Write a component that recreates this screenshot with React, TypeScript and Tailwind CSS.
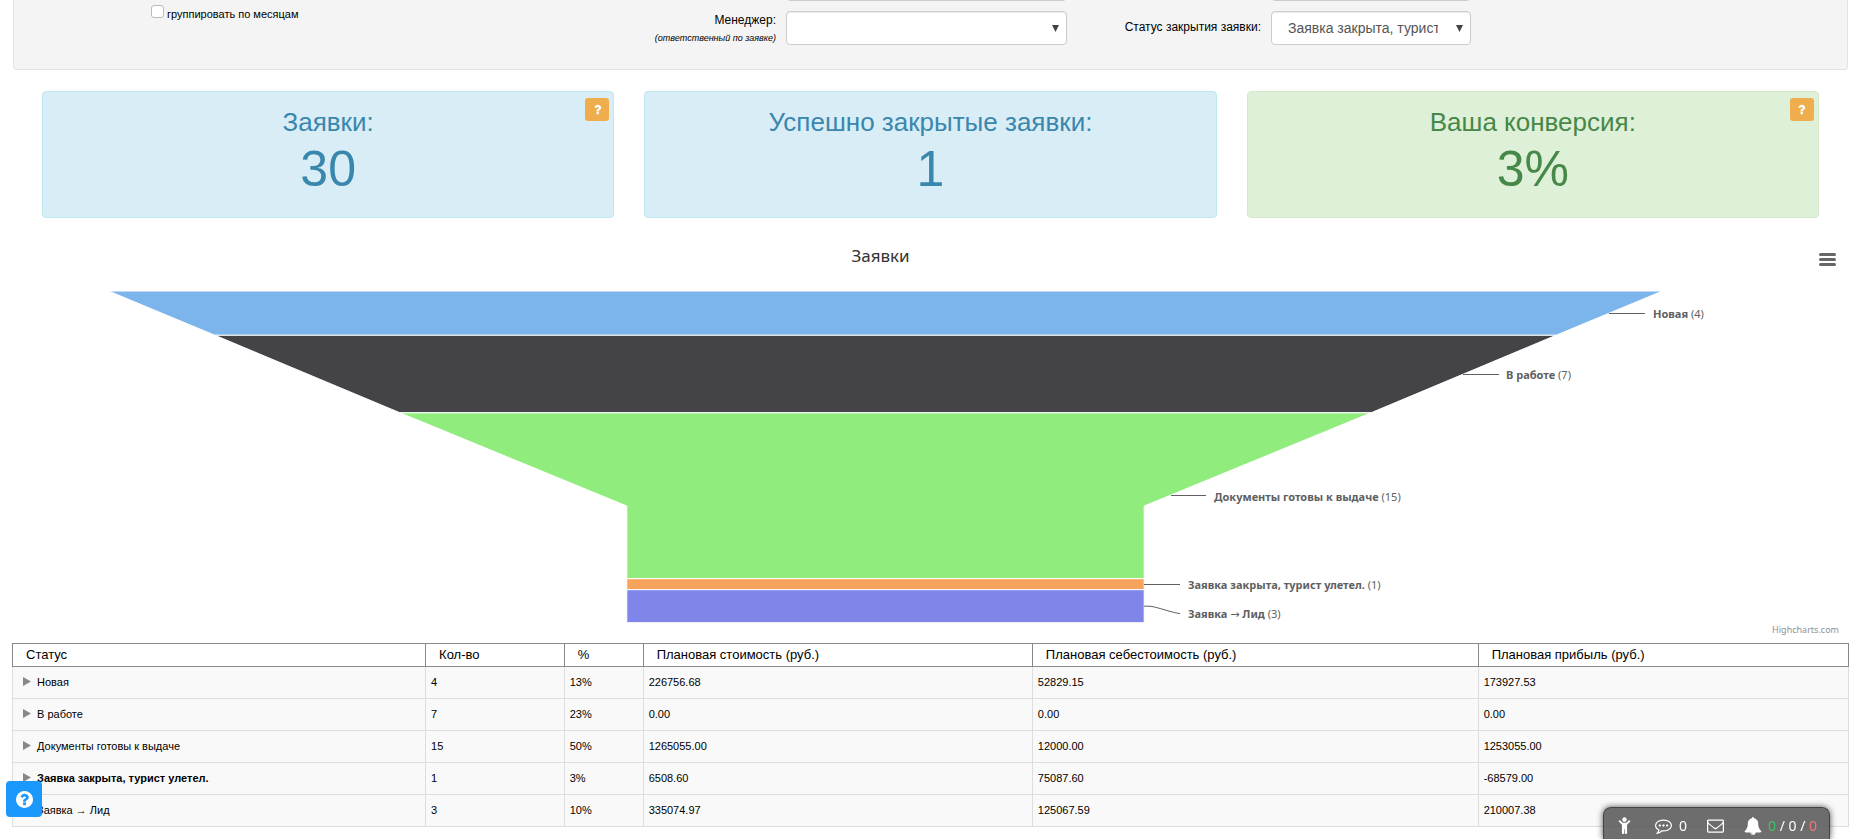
import React from "react";

const sans = "font-['Liberation_Sans',Arial,sans-serif]";
const lucida = "font-['Noto_Sans','Open_Sans',sans-serif]";

const QUESTION =
  "M1088 1256v240q0 16-12 28t-28 12h-240q-16 0-28-12t-12-28v-240q0-16 12-28t28-12h240q16 0 28 12t12 28zm316-600q0 54-15.5 101t-35 76.5-55 59.5-57.5 43.5-61 35.5q-41 23-68.5 65t-27.5 67q0 17-12 32.5t-28 15.5h-240q-15 0-25.5-18.5t-10.5-37.5v-45q0-83 65-156.5t143-108.5q59-27 84-56t25-76q0-42-46.5-74t-107.5-32q-65 0-108 29-35 25-107 115-13 16-31 16-12 0-25-8l-164-125q-13-10-15.5-25t5.5-28q160-266 464-266 80 0 161 31t146 83 106 127.5 41 158.5z";
const QUESTION_CIRCLE =
  "M1024 1376v-192q0-14-9-23t-23-9h-192q-14 0-23 9t-9 23v192q0 14 9 23t23 9h192q14 0 23-9t9-23zm256-672q0-88-55.5-163t-138.5-116-170-41q-243 0-371 213-15 24 8 42l132 100q7 6 19 6 16 0 25-12 53-68 86-92 34-24 86-24 48 0 85.5 26t37.5 59q0 38-20 61t-68 45q-63 28-115.5 86.5t-52.5 125.5v36q0 14 9 23t23 9h192q14 0 23-9t9-23q0-19 21.5-49.5t54.5-49.5q32-18 49-28.5t46-35 44.5-48 28-60.5 12.5-81zm384 192q0 209-103 385.5t-279.5 279.5-385.5 103-385.5-103-279.5-279.5-103-385.5 103-385.5 279.5-279.5 385.5-103 385.5 103 279.5 279.5 103 385.5z";
const CHILD =
  "M1188 476l-292 292v824q0 46-33 79t-79 33-79-33-33-79v-384h-64v384q0 46-33 79t-79 33-79-33-33-79v-824l-292-292q-28-28-28-68t28-68 68-28 68 28l228 228h368l228-228q28-28 68-28t68 28 28 68-28 68zm-324-220q0 93-65.5 158.5t-158.5 65.5-158.5-65.5-65.5-158.5 65.5-158.5 158.5-65.5 158.5 65.5 65.5 158.5z";
const COMMENTING =
  "M640 896q0 53-37.5 90.5t-90.5 37.5-90.5-37.5-37.5-90.5 37.5-90.5 90.5-37.5 90.5 37.5 37.5 90.5zm384 0q0 53-37.5 90.5t-90.5 37.5-90.5-37.5-37.5-90.5 37.5-90.5 90.5-37.5 90.5 37.5 37.5 90.5zm384 0q0 53-37.5 90.5t-90.5 37.5-90.5-37.5-37.5-90.5 37.5-90.5 90.5-37.5 90.5 37.5 37.5 90.5zm-512-512q-204 0-381.5 69.5t-282 187.5-104.5 255q0 112 71.5 213.5t201.5 175.5l87 50-27 96q-24 91-70 172 152-63 275-171l43-38 57 6q69 8 130 8 204 0 381.5-69.5t282-187.5 104.5-255-104.5-255-282-187.5-381.5-69.5zm896 512q0 174-120 321.5t-326 233-450 85.5q-70 0-145-8-198 175-460 242-49 14-114 22h-5q-15 0-27-10.5t-16-27.5v-1q-3-4-.5-12t2-10 4.5-9.5l6-9 7-8.5 8-9q7-8 31-34.5t34.5-38 31-39.5 32.5-51 27-59 26-76q-157-89-247.5-220t-90.5-281q0-174 120-321.5t326-233 450-85.5 450 85.5 326 233 120 321.5z";
const ENVELOPE =
  "M1664 1504v-768q-32 36-69 66-268 206-426 338-51 43-83 67t-86.5 48.5-102.5 24.5h-2q-48 0-102.5-24.5t-86.5-48.5-83-67q-158-132-426-338-37-30-69-66v768q0 13 9.5 22.5t22.5 9.5h1472q13 0 22.5-9.5t9.5-22.5zm0-1051v-24.5l-.5-13-3-12.5-5.5-9-9-7.5-14-2.5h-1472q-13 0-22.5 9.5t-9.5 22.5q0 168 147 284 193 152 401 317 6 5 35 29.5t46 37.5 44.5 31.5 50.5 27.5 43 9h2q20 0 43-9t50.5-27.5 44.5-31.5 46-37.5 35-29.5q208-165 401-317 54-43 100.5-115.5t46.5-131.5zm128-37v1088q0 66-47 113t-113 47h-1472q-66 0-113-47t-47-113v-1088q0-66 47-113t113-47h1472q66 0 113 47t47 113z";
const BELL =
  "M912 1696q0-16-16-16-59 0-101.5-42.5t-42.5-101.5q0-16-16-16t-16 16q0 73 51.5 124.5t124.5 51.5q16 0 16-16zm816-288q0 52-38 90t-90 38h-448q0 106-75 181t-181 75-181-75-75-181h-448q-52 0-90-38t-38-90q50-42 91-88t85-119.5 74.5-158.5 50-206 19.5-260q0-152 117-282.5t307-158.5q-8-19-8-39 0-40 28-68t68-28 68 28 28 68q0 20-8 39 190 28 307 158.5t117 282.5q0 139 19.5 260t50 206 74.5 158.5 85 119.5 91 88z";

function Glyph({ d, box = "0 0 1792 1792", className }: { d: string; box?: string; className: string }) {
  return (
    <svg viewBox={box} className={className} fill="currentColor" aria-hidden="true">
      <path d={d} />
    </svg>
  );
}

function Select({ id, label, options }: { id: string; label?: string; options: string[] }) {
  return (
    <div className="relative">
      <select
        id={id}
        aria-label={label}
        className="block h-[34px] w-full appearance-none rounded border border-[#ccc] bg-white pr-8 pl-4 text-sm text-[#555] shadow-[inset_0_1px_1px_rgba(0,0,0,0.075)]"
      >
        {options.map((o) => (
          <option key={o}>{o}</option>
        ))}
      </select>
      <svg viewBox="0 0 7 7" className="pointer-events-none absolute top-[14px] right-2 size-[7px] fill-[#444]" aria-hidden="true">
        <path d="M0 0h7L3.5 7z" />
      </svg>
    </div>
  );
}

function Filters() {
  return (
    <section className="mr-[2px] ml-[13px] -mt-[33px]">
      <form className="rounded-b border border-t-0 border-[#e3e3e3] bg-[#f4f4f4] pb-[23px] text-xs text-black">
        <div className="grid grid-cols-[586fr_186fr_281fr_204fr_200fr_376fr] gap-y-[10px]">
          <div className="col-start-3 row-start-1">
            <Select id="office" label="Офис" options={[""]} />
          </div>
          <div className="col-start-5 row-start-1">
            <Select id="source" label="Источник" options={[""]} />
          </div>
          <div className="col-start-1 row-start-2 flex items-start pl-[137px]">
            <input
              id="by-month"
              type="checkbox"
              className="-mt-[6px] size-[13px] appearance-none rounded-[3px] border border-[#bbb] bg-white"
            />
            <label htmlFor="by-month" className="-mt-[5px] pl-[3px] text-[11px] leading-4">
              группировать по месяцам
            </label>
          </div>
          <label htmlFor="manager" className="col-start-2 row-start-2 pt-px pr-[10px] text-right leading-[17px]">
            Менеджер:
            <br />
            <i className="text-[9px] leading-4">(ответственный по заявке)</i>
          </label>
          <div className="col-start-3 row-start-2">
            <Select id="manager" options={[""]} />
          </div>
          <label htmlFor="status" className="col-start-4 row-start-2 pt-2 pr-[10px] text-right leading-[17px]">
            Статус закрытия заявки:
          </label>
          <div className="col-start-5 row-start-2">
            <Select id="status" options={["Заявка закрыта, турист улетел."]} />
          </div>
        </div>
      </form>
    </section>
  );
}

const cards = [
  { title: "Заявки:", value: "30", help: true, tone: "border-[#bce8f1] bg-[#d9edf7] text-[#3a87ad]" },
  { title: "Успешно закрытые заявки:", value: "1", help: false, tone: "border-[#bce8f1] bg-[#d9edf7] text-[#3a87ad]" },
  { title: "Ваша конверсия:", value: "3%", help: true, tone: "border-[#d6e9c6] bg-[#dff0d8] text-[#468847]" },
];

function Cards() {
  return (
    <section className="mt-[21px] grid grid-cols-3 gap-[30px] pr-[31px] pl-[42px]">
      {cards.map((c) => (
        <div key={c.title} className={`relative h-[127px] rounded border pt-[14px] text-center ${c.tone}`}>
          <h2 className="text-[26px] leading-8">{c.title}</h2>
          <p className="text-[50px] leading-[62px]">{c.value}</p>
          {c.help && (
            <button
              type="button"
              aria-label="Справка"
              className="absolute top-[6px] right-1 flex h-[23px] w-6 items-center justify-center rounded-[3px] bg-[#f0ad4e] text-white"
            >
              <Glyph d={QUESTION} className="size-[13px]" />
            </button>
          )}
        </div>
      ))}
    </section>
  );
}

const labels = [
  { name: "Новая", count: 4, x: 1653, y: 318 },
  { name: "В работе", count: 7, x: 1506, y: 379 },
  { name: "Документы готовы к выдаче", count: 15, x: 1214, y: 501 },
  { name: "Заявка закрыта, турист улетел.", count: 1, x: 1188, y: 589 },
  { name: "Заявка → Лид", count: 3, x: 1188, y: 618 },
];

function Chart() {
  return (
    <section className={`relative mr-px ml-3 ${lucida}`}>
      <div className="flex pt-[26px]">
        <h3 className="flex-1 text-center text-[17px] leading-6 text-[#333]">Заявки</h3>
        <div className="flex w-[100px] items-start justify-end pt-[5px] pr-2">
          <button type="button" aria-label="Меню диаграммы" className="flex w-7 justify-center py-1">
            <svg viewBox="0 0 17 13" className="h-[13px] w-[17px]" stroke="#666" strokeWidth="3" strokeLinecap="round" aria-hidden="true">
              <path d="M1.5 1.5h14M1.5 6.5h14M1.5 11.5h14" />
            </svg>
          </button>
        </div>
      </div>
      <svg viewBox="12 270 1837 373" className="block w-full" role="img" aria-label="Воронка заявок">
        <g stroke="#fff" strokeWidth="1">
          <path fill="#7cb5ec" d="M108.500 291H1662.500L1556 335.300H215z" />
          <path fill="#434348" d="M215 335.300H1556L1371 412.800H400z" />
          <path fill="#90ed7d" d="M400 412.800H1371L1144.200 506V578.700H626.800V506z" />
          <path fill="#f7a35c" d="M626.800 578.700h517.400v11h-517.400z" />
          <path fill="#8085e9" d="M626.800 589.700h517.400v33h-517.400z" />
        </g>
        <g fill="none" stroke="#606060" strokeWidth="1">
          <path d="M1645 313.500H1609M1499 374.500H1463M1206 495.500H1171M1180 584.500H1144" />
          <path d="M1180 613.500C1175 613.500 1160 608 1152 606.500Q1150 606 1144 606.200" />
        </g>
        <g fill="#606060" fontSize="11">
          {labels.map((l) => (
            <text key={l.name} x={l.x} y={l.y}>
              <tspan fontWeight="bold">
                <Arrowed text={l.name} />
              </tspan>{" "}
              ({l.count})
            </text>
          ))}
        </g>
      </svg>
      <a href="#highcharts" className="absolute right-[10px] bottom-[7px] text-[9px] leading-3 text-[#909090]">
        Highcharts.com
      </a>
    </section>
  );
}

function Arrowed({ text }: { text: string }) {
  const [before, after] = text.split("→");
  if (after === undefined) return <>{text}</>;
  return (
    <>
      {before}
      <tspan className="font-['DejaVu_Sans',sans-serif] font-normal">→</tspan>
      {after}
    </>
  );
}

const columns = [
  { name: "Статус", width: "w-[22.5%]" },
  { name: "Кол-во", width: "w-[7.55%]" },
  { name: "%", width: "w-[4.3%]" },
  { name: "Плановая стоимость (руб.)", width: "w-[21.2%]" },
  { name: "Плановая себестоимость (руб.)", width: "w-[24.28%]" },
  { name: "Плановая прибыль (руб.)", width: "w-[20.17%]" },
];

const rows = [
  ["Новая", "4", "13%", "226756.68", "52829.15", "173927.53"],
  ["В работе", "7", "23%", "0.00", "0.00", "0.00"],
  ["Документы готовы к выдаче", "15", "50%", "1265055.00", "12000.00", "1253055.00"],
  ["Заявка закрыта, турист улетел.", "1", "3%", "6508.60", "75087.60", "-68579.00"],
  ["Заявка → Лид", "3", "10%", "335074.97", "125067.59", "210007.38"],
];

function StatusTable() {
  return (
    <div className="mr-px ml-3">
      <table className="w-full table-fixed border-collapse text-left text-black">
        <thead>
          <tr className="h-[23px]">
            {columns.map((c) => (
              <th key={c.name} className={`border border-[#888] bg-white p-0 pl-[13px] text-[13px] leading-4 font-normal ${c.width}`}>
                {c.name}
              </th>
            ))}
          </tr>
        </thead>
        <tbody>
          {rows.map(([name, ...cells]) => (
            <tr key={name} className="h-8 bg-[#f9f9f9] text-[11px] leading-4">
              <td className="border border-[#ddd] p-0 pb-[2px]">
                <div className="flex items-center pl-[10px]">
                  <button type="button" aria-label="Развернуть" className="mr-[6px]">
                    <svg viewBox="0 0 8 9" className="h-[9px] w-2 fill-[#888]" aria-hidden="true">
                      <path d="M0 0L8 4.500L0 9z" />
                    </svg>
                  </button>
                  {name.startsWith("Заявка закрыта") ? <b>{name}</b> : name}
                </div>
              </td>
              {cells.map((c, i) => (
                <td key={i} className="border border-[#ddd] p-0 pb-[2px] pl-[5px]">
                  {c}
                </td>
              ))}
            </tr>
          ))}
        </tbody>
      </table>
    </div>
  );
}

function Dock() {
  return (
    <div
      className={`fixed right-5 bottom-0 flex h-8 w-[227px] items-center rounded-t-lg border border-b-0 border-[#444] bg-[#555]/85 pt-1 pl-[14px] text-sm leading-5 text-white shadow-[0_0_6px_rgba(0,0,0,0.7)] ${lucida}`}
    >
      <button type="button" aria-label="Профиль">
        <Glyph d={CHILD} box="0 0 1280 1792" className="h-[18px] w-[13px]" />
      </button>
      <button type="button" className="ml-6 flex items-center gap-[7px]">
        <Glyph d={COMMENTING} className="size-[17px]" />
        <span>0</span>
      </button>
      <button type="button" aria-label="Почта" className="ml-5">
        <Glyph d={ENVELOPE} className="size-[17px]" />
      </button>
      <button type="button" className="ml-5 flex items-center gap-[6px]">
        <Glyph d={BELL} className="size-[18px]" />
        <span className="whitespace-nowrap">
          <span className="text-[#3fc45f]">0</span> / 0 / <span className="text-[#f07878]">0</span>
        </span>
      </button>
    </div>
  );
}

export default function App() {
  return (
    <main className={`flow-root bg-white ${sans}`}>
      <Filters />
      <Cards />
      <Chart />
      <StatusTable />
      <button
        type="button"
        aria-label="Помощь"
        className="fixed bottom-[22px] left-[6px] flex size-9 items-center justify-center rounded bg-[#1a98fc] text-white"
      >
        <Glyph d={QUESTION_CIRCLE} box="128 128 1536 1536" className="size-[17px]" />
      </button>
      <Dock />
    </main>
  );
}
